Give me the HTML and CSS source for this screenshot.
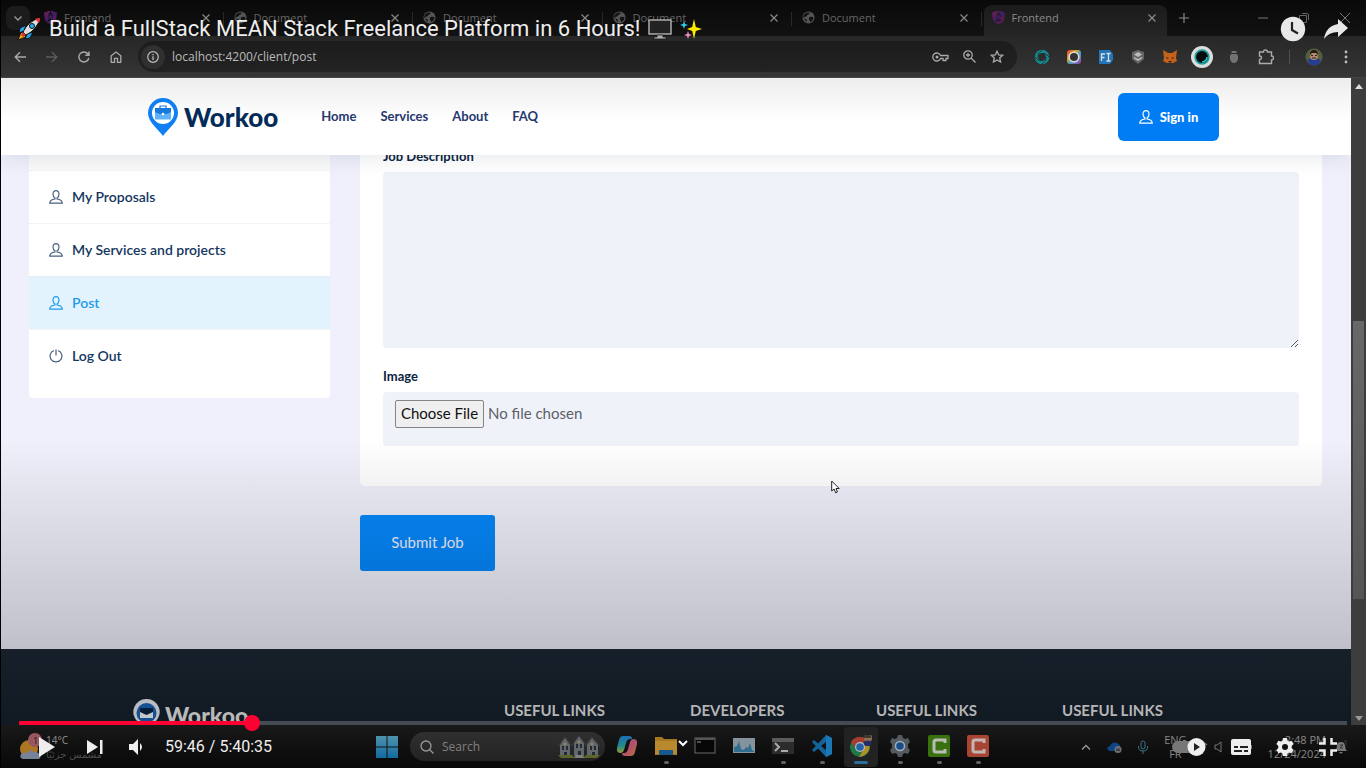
FILE: index.html
```html
<!DOCTYPE html>
<html lang="en">
<head>
<meta charset="utf-8">
<title>Build a FullStack MEAN Stack Freelance Platform in 6 Hours!</title>
<link rel="stylesheet" href="styles.css">
</head>
<body>
<svg class="defs" aria-hidden="true">
  <defs>
    <linearGradient id="ng" x1="0" y1="0" x2="1" y2="1"><stop offset="0" stop-color="#7a1d50"/><stop offset=".5" stop-color="#3d1e66"/><stop offset="1" stop-color="#7b1748"/></linearGradient>
    <linearGradient id="rainbow" x1="0" y1="0" x2="1" y2="1"><stop offset="0" stop-color="#e43d30"/><stop offset=".35" stop-color="#d9a52a"/><stop offset=".6" stop-color="#3e9fd0"/><stop offset="1" stop-color="#b335a0"/></linearGradient>
    <linearGradient id="cop" x1="0" y1="0" x2="1" y2="1"><stop offset="0" stop-color="#8a5aa0"/><stop offset=".5" stop-color="#b0506a"/><stop offset="1" stop-color="#b8743c"/></linearGradient>
    <linearGradient id="copblue" x1="0" y1="0" x2="0" y2="1"><stop offset="0" stop-color="#1b6fb5"/><stop offset=".6" stop-color="#258a8c"/><stop offset="1" stop-color="#9c9a32"/></linearGradient>
    <linearGradient id="win" x1="0" y1="0" x2="0" y2="1"><stop offset="0" stop-color="#4f93ae"/><stop offset="1" stop-color="#136a9f"/></linearGradient>
    <symbol id="angular" viewBox="0 0 14 14"><path d="M5 0 0 2l1 8 3 2L5 4l2-4Z M9 0l5 2-1 8-3 2-1-8-2-4Z M4 11h6l2 1-5 2-5-2Z M7 3l3 6H8L7 7 6 9H4Z" fill="url(#ng)"/></symbol>
    <symbol id="globe" viewBox="0 0 14 14"><circle cx="7" cy="7" r="6.500" fill="#555"/><path d="M2 4c2-2 4-3 6-2 1 1-1 2-2 2s0 2-2 2-1 2-3 1ZM7.500 7c1-1 4-1 5 0l-1 3-2.500 2c-1-1 0-2-1.500-2.500ZM2 8l3 1v3Z" fill="#121212"/></symbol>
    <symbol id="x" viewBox="0 0 10 10"><path d="m1.500 1.500 7 7m0-7-7 7" stroke="currentColor" stroke-width="1.200" fill="none"/></symbol>
    <symbol id="person" viewBox="0 0 14 14"><path d="M7 .7c-2 0-3 1.400-3 3.300 0 1.700.7 3.300 2 4v1C4 9.300.8 10.500.7 13.200h12.600C13.200 10.500 10 9.300 8 9V8c1.300-.7 2-2.300 2-4C10 2.100 9 .7 7 .7Z" fill="none" stroke="currentColor" stroke-width="1.200"/></symbol>
    <symbol id="pin" viewBox="0 0 30 38"><path d="M15 0a15 15 0 0 0-15 15c0 9 10 16 15 23 5-7 15-14 15-23A15 15 0 0 0 15 0Z" fill="#0f7ff2"/><circle cx="15" cy="15" r="11" fill="#fff"/><path d="M7 10h16v11.500H7z" fill="#5eb2fa"/><path d="M7 10h16v4c-5 3-11 3-16 0Z" fill="#1779dd"/><path d="M12 10V8h6v2" fill="none" stroke="#1779dd" stroke-width="1.200"/><circle cx="15" cy="16" r="1.300" fill="#fff"/></symbol>
  </defs>
</svg>

<div class="desktop">
  <div class="tabstrip">
    <button class="tab-search" aria-label="Search tabs"><svg width="10" height="10" viewBox="0 0 10 10"><path d="m1.500 3.500 3.500 3.500 3.500-3.500" fill="none" stroke="#999" stroke-width="1.400"/></svg></button>
    <div class="tabs">
      <div class="tab"><svg class="fav"><use href="#angular"/></svg><span class="tab-name">Frontend</span><button class="tab-close" aria-label="Close tab"><svg><use href="#x"/></svg></button></div>
      <div class="tab"><svg class="fav"><use href="#globe"/></svg><span class="tab-name">Document</span><button class="tab-close" aria-label="Close tab"><svg><use href="#x"/></svg></button></div>
      <div class="tab"><svg class="fav"><use href="#globe"/></svg><span class="tab-name">Document</span><button class="tab-close" aria-label="Close tab"><svg><use href="#x"/></svg></button></div>
      <div class="tab"><svg class="fav"><use href="#globe"/></svg><span class="tab-name">Document</span><button class="tab-close" aria-label="Close tab"><svg><use href="#x"/></svg></button></div>
      <div class="tab"><svg class="fav"><use href="#globe"/></svg><span class="tab-name">Document</span><button class="tab-close" aria-label="Close tab"><svg><use href="#x"/></svg></button></div>
      <div class="tab active"><svg class="fav"><use href="#angular"/></svg><span class="tab-name">Frontend</span><button class="tab-close" aria-label="Close tab"><svg><use href="#x"/></svg></button></div>
    </div>
    <button class="new-tab" aria-label="New tab"><svg width="10" height="10" viewBox="0 0 10 10"><path d="M5 0v10M0 5h10" stroke="#888" stroke-width="1.200"/></svg></button>
    <div class="window-buttons">
      <button aria-label="Minimize"><svg width="10" height="10" viewBox="0 0 10 10"><path d="M0 5h10" stroke="#777"/></svg></button>
      <button aria-label="Restore"><svg width="10" height="10" viewBox="0 0 10 10"><path d="M.5 2.500h7v7h-7zM3 .5h5q1.500 0 1.500 1.500v5" fill="none" stroke="#666"/></svg></button>
      <button aria-label="Close"><svg width="10" height="10" viewBox="0 0 10 10"><path d="m0 0 10 10M10 0 0 10" stroke="#777"/></svg></button>
    </div>
  </div>

  <div class="toolbar">
    <div class="nav-buttons">
      <button aria-label="Back"><svg width="12" height="12" viewBox="0 0 12 12"><path d="M12 6H1.500M6 1.200 1.200 6 6 10.800" fill="none" stroke="#aaa" stroke-width="1.400"/></svg></button>
      <button aria-label="Forward"><svg width="12" height="12" viewBox="0 0 12 12"><path d="M0 6h10.500M6 1.200 10.800 6 6 10.800" fill="none" stroke="#5c5c5c" stroke-width="1.400"/></svg></button>
      <button aria-label="Reload"><svg width="12" height="12" viewBox="0 0 12 12"><path d="M10.800 7A5 5 0 1 1 9.800 2.800L11 4M11 .5V4.300H7.300" fill="none" stroke="#aaa" stroke-width="1.400"/></svg></button>
      <button aria-label="Home"><svg width="12" height="12" viewBox="0 0 12 12"><path d="M1.200 11.300V4.800L6 1l4.800 3.800v6.500H7.500v-4h-3v4Z" fill="none" stroke="#aaa" stroke-width="1.300"/></svg></button>
    </div>
    <div class="address">
      <span class="site-info"><svg width="12" height="12" viewBox="0 0 12 12"><circle cx="6" cy="6" r="5.300" fill="none" stroke="#bbb" stroke-width="1.200"/><path d="M6 5.200V9M6 3v1.300" stroke="#bbb" stroke-width="1.300"/></svg></span>
      <input class="url" aria-label="Address" value="localhost:4200/client/post">
      <button aria-label="Passwords"><svg width="17" height="12" viewBox="0 0 17 12"><path d="M8.500 4.500A4 4 0 1 0 8.500 7.500H11V9.500h3V7.500h2V4.500Z" fill="none" stroke="#aaa" stroke-width="1.300"/><circle cx="5" cy="6" r="1.500" fill="#aaa"/></svg></button>
      <button aria-label="Zoom"><svg width="13" height="13" viewBox="0 0 13 13"><path d="M8 8l4.500 4.500M3 5h4M5 3v4" stroke="#aaa" stroke-width="1.300"/><circle cx="5" cy="5" r="4.200" fill="none" stroke="#aaa" stroke-width="1.300"/></svg></button>
      <button aria-label="Bookmark"><svg width="14" height="13" viewBox="0 0 14 13"><path d="m7 1.200 1.700 3.700 4 .4-3 2.700.9 4L7 9.900 3.400 12l.9-4-3-2.700 4-.4Z" fill="none" stroke="#aaa" stroke-width="1.300"/></svg></button>
    </div>
    <div class="extensions">
      <svg viewBox="0 0 16 16"><circle cx="8" cy="8" r="5.500" fill="none" stroke="#148a8f" stroke-width="3.500"/><path d="M8 1Q3 4 4 9M15 8q-4-5-8-3M8 15q5-3 4-7M1 8q4 5 8 3" fill="none" stroke="#222" stroke-width=".8"/></svg>
      <svg viewBox="0 0 16 16"><rect x="1" y="1" width="14" height="14" rx="3" fill="url(#rainbow)"/><circle cx="8" cy="8" r="4.800" fill="#343434" stroke="#ddd" stroke-width="1.600"/></svg>
      <svg viewBox="0 0 16 16"><path d="M1 1h11l3 4v6l-3 4H1Z" fill="#2275b9"/><path d="M3.500 12V5H7M3.500 8.500h3M8.500 4.500h4M10.500 4.500v7M8.500 12h4" fill="none" stroke="#ddd" stroke-width="1.300"/></svg>
      <svg viewBox="0 0 16 16"><path d="m8 1 6 2v7l-6 5-6-5V3Z" fill="#666"/><path d="m8 3 4 2.500L8 8 4 5.500ZM4 8l4 2 4-2v1.500L8 12 4 9.500Z" fill="#bbb"/></svg>
      <svg viewBox="0 0 16 16"><path d="m1 1 5 3h4l5-3-1 8 1 3-4 2H5l-4-2 1-3Z" fill="#c4621c"/><path d="m4 8 3 1-2 1ZM12 8 9 9l2 1ZM6 12h4l-1 1.500H7Z" fill="#402414"/></svg>
      <svg viewBox="0 0 22 22" class="ext-large"><circle cx="11" cy="11" r="11" fill="#ddd"/><circle cx="11" cy="11" r="6.800" fill="#060b0c" stroke="#1d9ea0" stroke-width="1.800"/><path d="M11 16a5 5 0 0 0 5-5" fill="none" stroke="#27d0cf" stroke-width="1.500"/></svg>
      <svg viewBox="0 0 16 16"><path d="M5.500 2h5v2h-5zM5 5h6l1 2v3q-1 4-4 4t-4-4V7Z" fill="#737373"/></svg>
      <svg viewBox="0 0 16 16"><path d="M1.500 3h4q0-2 2-2t2 2h4v4q2 0 2 2t-2 2v3.500h-12V10.500q2 0 2-1.700t-2-1.800Z" fill="none" stroke="#aaa" stroke-width="1.400"/></svg>
    </div>
    <span class="divider"></span>
    <svg class="avatar" viewBox="0 0 18 18"><circle cx="9" cy="9" r="8.500" fill="#55603c"/><path d="M2 12q7-4 14 0l-3 5H5Z" fill="#263d94"/><circle cx="9" cy="8" r="4" fill="#b78870"/><path d="M5 7q0-5 4-5t4 5l-2-2H7Z" fill="#241b17"/><path d="M6 7.500h2M10 7.500h2M7 10h4" stroke="#222"/></svg>
    <button class="menu" aria-label="Menu"><svg width="4" height="14" viewBox="0 0 4 14"><g fill="#bbb"><circle cx="2" cy="2" r="1.400"/><circle cx="2" cy="7" r="1.400"/><circle cx="2" cy="12" r="1.400"/></g></svg></button>
  </div>

  <div class="browser-view">
    <div class="page">
      <header class="site-header">
        <a class="brand" href="#"><svg width="30" height="38"><use href="#pin"/></svg><span>Workoo</span></a>
        <nav class="site-nav"><a href="#">Home</a><a href="#">Services</a><a href="#">About</a><a href="#">FAQ</a></nav>
        <button class="sign-in"><svg width="14" height="14"><use href="#person"/></svg>Sign in</button>
      </header>
      <main class="content">
        <nav class="side-menu">
          <a class="side-top" href="#" aria-label="Previous item"></a>
          <a href="#"><svg><use href="#person"/></svg>My Proposals</a>
          <a href="#"><svg><use href="#person"/></svg>My Services and projects</a>
          <a class="current" href="#"><svg><use href="#person"/></svg>Post</a>
          <a href="#"><svg viewBox="0 0 14 14"><path d="M5 1.500a5.900 5.900 0 1 0 4 0M7 .5v6" fill="none" stroke="currentColor" stroke-width="1.200"/></svg>Log Out</a>
        </nav>
        <form class="job-form">
          <div class="panel">
            <label for="desc" class="first-label">Job Description</label>
            <textarea id="desc"></textarea>
            <label for="image">Image</label>
            <input type="file" id="image">
          </div>
          <button type="button" class="submit">Submit Job</button>
        </form>
      </main>
      <footer class="site-footer">
        <div class="footer-brand"><svg width="27" height="34" viewBox="0 0 27 34"><path d="M13.500 0A13 13 0 0 0 5 23l8.500 11L22 23A13 13 0 0 0 13.500 0Z" fill="#b9bcc0"/><circle cx="13.500" cy="14" r="10" fill="#164f93"/><path d="M7 10h13v9H7z" fill="#c3c7cc"/><path d="M7 9h13v4l-6.500 3L7 13Z" fill="#081d38"/></svg><span>Workoo</span></div>
        <h4>USEFUL LINKS</h4><h4>DEVELOPERS</h4><h4>USEFUL LINKS</h4><h4>USEFUL LINKS</h4>
      </footer>
    </div>
    <div class="scrollbar">
      <svg width="8" height="5" viewBox="0 0 8 5"><path d="M0 5 4 0l4 5Z" fill="#ddd"/></svg>
      <span class="before-thumb"></span><span class="thumb"></span><span class="after-thumb"></span>
      <svg width="8" height="5" viewBox="0 0 8 5"><path d="m0 0 4 5 4-5Z" fill="#999"/></svg>
    </div>
  </div>

  <div class="taskbar">
    <div class="weather">
      <svg width="26" height="28" viewBox="0 0 26 28"><circle cx="10" cy="16" r="9" fill="#ac7623"/><path d="M4 26q-4-1-2-5 3-3 5 0 3-6 8-2 2-1 4 1 5 2 1 6Z" fill="#758298"/><circle cx="16" cy="7" r="7" fill="#98585f"/><text x="14" y="11" class="badge-text">1</text></svg>
      <div class="weather-text"><span>14°C</span><span dir="rtl">مشمس جزئيًا</span></div>
    </div>
    <div class="apps">
      <svg class="start" viewBox="0 0 22 22"><path d="M0 0h10.500v10.500H0zM11.500 0H22v10.500H11.500zM0 11.500h10.500V22H0zM11.500 11.500H22V22H11.500z" fill="url(#win)"/></svg>
      <div class="search"><svg width="14" height="14" viewBox="0 0 14 14"><circle cx="6" cy="6" r="5" fill="none" stroke="#999" stroke-width="1.300"/><path d="m9.500 9.500 4 4" stroke="#999" stroke-width="1.300"/></svg><input aria-label="Search" placeholder="Search"><svg width="42" height="22" viewBox="0 0 42 22"><path d="M2 20V9l5-7 5 7v11ZM16 20V7l5-7 5 7v13ZM29 20V9l5-7 6 7v11Z" fill="#62686c"/><path d="m0 10 7-9 7 9M14 9l7-9 7 9M27 10l7-9 8 9" fill="none" stroke="#3d4044"/><path d="M4 10h2v4H4zm4 0h2v4H8zm-2 6h3v4H6zm12-8h2v4h-2zm4 0h2v4h-2zm-2 7h3v5h-3zm12-5h2v4h-2zm4 0h2v4h-2zm-2 6h3v4h-3z" fill="#222b32"/><path d="M6 7h2v2H6zm14-2h2v2h-2zm13 2h2v2h-2z" fill="#a58a4c"/><path d="M0 19h14l3 3h8l3-3h14l-3 3H3Z" fill="#5c6428"/><path d="m18 19 6 0 3 3H16Z" fill="#80817a"/></svg></div>
      <span class="app idle"><svg viewBox="0 0 22 22"><path d="M7 1h6q3 0 3 3h-2q-3 0-4 4L8 15q-1 3-3 3-5 0-4-5l2-8q1-4 4-4Z" fill="url(#copblue)"/><path d="M15 21H9q-3 0-3-3h2q3 0 4-4l2-7q1-3 3-3 5 0 4 5l-2 8q-1 4-4 4Z" fill="url(#cop)"/></svg></span>
      <span class="app"><svg viewBox="0 0 22 22"><path d="M0 2h7l2 2h13v16H0Z" fill="#a8781f"/><path d="M0 6h22v13H0Z" fill="#b88a2d"/><path d="M4 15h14v5H4Z" fill="#16598d"/></svg></span>
      <span class="app idle"><svg viewBox="0 0 22 22"><rect x="1" y="3" width="20" height="15" fill="#060606" stroke="#6b6b6b"/><path d="M2 4h18" stroke="#555" stroke-width="2"/><path d="M3 7h4" stroke="#999"/></svg></span>
      <span class="app idle"><svg viewBox="0 0 22 22"><path d="M0 3h22v15H0Z" fill="#84939c"/><path d="M1 17v-5l3-1 2-5 2 8 3 1 2-3 2 1 2-5 2 7 2 1v1Z" fill="#326d91"/></svg></span>
      <span class="app"><svg viewBox="0 0 22 22"><path d="M0 3h22v16H0Z" fill="#2c2c2c"/><path d="M0 3h22v4H0Z" fill="#5b5b5b"/><path d="m3 8 4 4-4 4M9 16h7" fill="none" stroke="#aaa" stroke-width="2"/></svg></span>
      <span class="app"><svg viewBox="0 0 22 22"><path d="M1 7 3 5l13 11V6L3 17l-2-2L15 0l6 3v16l-6 3Z" fill="#14639b"/><path d="m15 0 6 3v16l-6 3Z" fill="#1b78b7"/></svg></span>
      <span class="app focused"><svg viewBox="0 0 22 22"><circle cx="10" cy="12" r="10" fill="#1e7a45"/><path d="M1 7q3-5 9-5 6 0 9 5h-9l-4 7Z" fill="#a93a31"/><path d="M12 7h7q2 8-3 12-3 3-7 3l5-8Z" fill="#b48f27"/><circle cx="10" cy="12" r="5" fill="#b8bcc0"/><circle cx="10" cy="12" r="3.800" fill="#2463ac"/><circle cx="18" cy="3" r="4" fill="#8e7054"/><path d="M14 1q3-3 7 0v2h-7Z" fill="#40382c"/><path d="M13 7q5-3 9 0l-2 4h-5Z" fill="#222d63"/></svg></span>
      <span class="app"><svg viewBox="0 0 22 22"><path d="M9 0h4l1 3 2 1 3-1 2 4-2 2v4l2 2-2 4-3-1-2 1-1 3H9l-1-3-2-1-3 1-2-4 2-2V9L1 7l2-4 3 1 2-1Z" fill="#555a60"/><circle cx="11" cy="11" r="4.500" fill="#164e88" stroke="#a3b0bc" stroke-width="1.500"/></svg></span>
      <span class="app"><svg viewBox="0 0 22 22"><rect width="22" height="22" rx="2" fill="#3a710f"/><path d="M17 8V5H8Q6 5 6 7v8q0 2 2 2h9v-3" fill="none" stroke="#b8bcb5" stroke-width="3"/></svg></span>
      <span class="app"><svg viewBox="0 0 22 22"><rect width="22" height="22" rx="2" fill="#a84434"/><path d="M17 8V5H8Q6 5 6 7v8q0 2 2 2h9v-3" fill="none" stroke="#c3b5b2" stroke-width="3"/></svg></span>
    </div>
    <div class="tray">
      <svg width="10" height="6" viewBox="0 0 10 6"><path d="m1 5.500 4-4 4 4" fill="none" stroke="#999" stroke-width="1.300"/></svg>
      <svg width="15" height="12" viewBox="0 0 15 12"><path d="M3 10q-4-1-2-4 2-1 2-1 2-5 7-3 3 1 3 4v4Z" fill="#0e4585"/><circle cx="11" cy="8.500" r="3.500" fill="#6d7377"/><path d="M9 8h4M9 9.500h4" stroke="#222" stroke-width=".8"/></svg>
      <svg width="10" height="14" viewBox="0 0 10 14"><rect x="3" y="1" width="4" height="8" rx="2" fill="none" stroke="#3c7382"/><path d="M.5 6v1q0 4 4.500 4t4.500-4V6M5 11v3" fill="none" stroke="#3c7382"/></svg>
      <div class="lang"><span>ENG</span><span>FR</span></div>
      <svg width="66" height="14" viewBox="0 0 66 14"><path d="M0 5q9-8 17 0M3 8q6-5 11 0" fill="none" stroke="#777" stroke-width="1.400"/><path d="M25 5h2l4-3v10l-4-3h-2Z" fill="none" stroke="#777"/><rect x="42" y="3" width="18" height="8" rx="2" fill="#777"/><path d="M61 5v4" stroke="#777" stroke-width="2"/></svg>
      <div class="clock"><span>2:48 PM</span><span>12/24/2024</span></div>
      <svg width="14" height="14" viewBox="0 0 14 14"><path d="M1 11q2-2 2-6 0-3 4-3 4 0 4 3 0 4 2 6ZM5 12h4q-2 3-4 0Z" fill="#777"/><path d="M6 5h3L6 8h3M10 1h3l-3 3h3" fill="none" stroke="#333"/></svg>
    </div>
  </div>
</div>

<svg class="pointer" width="9" height="14" viewBox="0 0 9 14"><path d="M.7 1v10l2.400-2 1.500 3.800 1.800-.8L5 8.500h3.200Z" fill="#fff" stroke="#222"/></svg>

<div class="player">
  <div class="player-top">
    <h1 class="video-title">
      <svg width="24" height="24" viewBox="0 0 24 24"><path d="M4 15 1 23l8-3Z" fill="#f5a21b" stroke="#111"/><path d="M9 8 3 11l-1 5 5-2ZM16 15l-3 6-5 1 2-5Z" fill="#22a7e8" stroke="#111"/><path d="M6 15Q11 4 23 1 20 13 9 18Z" fill="#ddd" stroke="#111"/><path d="M18 2q2-1 5-1 0 3-1 5Z" fill="#e33"/><circle cx="15" cy="9" r="2.500" fill="#2bb1ee" stroke="#111"/><path d="m6 15 3 3-3 2-2-2Z" fill="#d33"/></svg>
      <span>Build a FullStack MEAN Stack Freelance Platform in 6 Hours!</span>
      <svg width="24" height="22" viewBox="0 0 24 22"><path d="M1 2h22v14H1Z" fill="#222" stroke="#aaa" stroke-width="1.500"/><path d="M9 17h6v2h3v2H6v-2h3Z" fill="#aaa" stroke="#111" stroke-width=".7"/></svg>
      <svg width="22" height="22" viewBox="0 0 22 22"><path d="m14 1 1.800 8L22 11l-6.200 2L14 21l-1.800-8L7 11l5.200-2Z" fill="#ffea00"/><path d="m4 3 1 3 3 1-3 1-1 3-1-3-3-1 3-1Z" fill="#30cff5"/><path d="m8 13 1 3 3 1-3 1-1 3-1-3-3-1 3-1Z" fill="#f58bc4"/></svg>
    </h1>
    <button aria-label="Watch later"><svg width="26" height="26" viewBox="0 0 26 26"><circle cx="13" cy="13" r="12.200" fill="#e8e8e8"/><path d="M12 6v8l6 3.500" fill="none" stroke="#222" stroke-width="2.200"/></svg></button>
    <button aria-label="Share"><svg width="24" height="20" viewBox="0 0 24 20"><path d="M14 0v5Q2 7 0 20q5-7 14-7v5l10-9Z" fill="#e8e8e8"/></svg></button>
  </div>
  <button class="more" aria-label="More videos"><svg width="10" height="7" viewBox="0 0 10 7"><path d="m1 1 4 4 4-4" fill="none" stroke="#fff" stroke-width="2"/></svg></button>
  <div class="player-bottom">
    <input class="progress" type="range" aria-label="Seek" min="0" max="20435" value="3586">
    <div class="controls">
      <button aria-label="Play"><svg width="16" height="20" viewBox="0 0 16 20"><path d="M0 0v20l16-10Z" fill="#eee"/></svg></button>
      <button aria-label="Next"><svg width="16" height="16" viewBox="0 0 16 16"><path d="M0 1v14l11-7ZM13 1h2.500v14H13Z" fill="#eee"/></svg></button>
      <button aria-label="Mute"><svg width="14" height="16" viewBox="0 0 14 16"><path d="M0 5v6h4l5 5V0L4 5ZM11 4q4 4 0 8Z" fill="#eee"/></svg></button>
      <span class="time">59:46 / 5:40:35</span>
      <span class="spring"></span>
      <button aria-label="Autoplay"><svg width="34" height="18" viewBox="0 0 34 18"><rect y="3" width="26" height="12" rx="6" fill="#777"/><circle cx="24.500" cy="9" r="9" fill="#eee"/><path d="M22 5v8l6-4Z" fill="#222"/></svg></button>
      <button aria-label="Subtitles"><svg width="20" height="16" viewBox="0 0 20 16"><rect width="20" height="16" rx="2" fill="#eee"/><path d="M3 8h4M9 8h8M3 12h8M13 12h4" stroke="#222" stroke-width="2"/></svg></button>
      <button aria-label="Settings"><svg width="18" height="18" viewBox="0 0 18 18"><path d="M7 0h4l.5 2.500 1.700 1L15.600 2.700l2 3.400L15.700 8v2l1.900 1.900-2 3.400-2.400-.8-1.700 1L11 18H7l-.5-2.500-1.700-1-2.400.8-2-3.400L2.300 10V8L.4 6.100l2-3.400 2.400.8 1.700-1ZM9 6a3 3 0 1 0 0 6 3 3 0 0 0 0-6Z" fill="#eee" fill-rule="evenodd"/></svg></button>
      <button aria-label="Exit full screen"><svg width="18" height="18" viewBox="0 0 18 18"><path d="M0 5.500h5.500V0M18 5.500h-5.500V0M0 12.500h5.500V18M18 12.500h-5.500V18" fill="none" stroke="#eee" stroke-width="2.500"/></svg></button>
    </div>
  </div>
</div>
</body>
</html>
```
FILE: styles.css
```css
* { box-sizing: border-box; }
body { margin: 0; min-height: 100vh; background: #000; overflow: hidden; font-family: "Open Sans", sans-serif; }
button { border: 0; padding: 0; background: none; color: inherit; font: inherit; display: flex; align-items: center; justify-content: center; flex: none; }
a { color: inherit; text-decoration: none; }
svg { display: block; flex: none; }
.defs { position: absolute; width: 0; height: 0; }
.desktop { height: 100vh; display: flex; flex-direction: column; padding-left: 1px; }

/* Browser frame */
.tabstrip { height: 36px; flex: none; display: flex; align-items: center; background: linear-gradient(#090909, #121212); color: #777; font-size: 11px; padding-left: 5px; }
.tab-search { width: 24px; height: 24px; border-radius: 8px; background: #1c1c1c; }
.tabs { flex: 0 1 1131px; min-width: 0; display: flex; margin-left: 6px; align-self: stretch; padding-top: 5px; }
.tab { flex: 1 1 190px; min-width: 0; display: flex; align-items: center; padding: 0 15px 6px 8px; color: #666; position: relative; }
.tab:not(.active)::after { content: ""; position: absolute; right: 2px; top: 7px; width: 1px; height: 14px; background: #292929; }
.tab.active { flex-basis: 184px; padding-right: 10px; background: linear-gradient(#1b1b1b, #252525); border-radius: 8px 8px 0 0; color: #8a8a8a; }
.fav { width: 13px; height: 13px; }
.tab-name { flex: 1; margin-left: 7px; }
.tab-close svg { width: 10px; height: 10px; color: #888; }
.new-tab { width: 24px; height: 24px; margin-left: 5px; }
.window-buttons { margin-left: auto; display: flex; gap: 31px; padding-right: 16px; }
.toolbar { height: 42px; flex: none; display: flex; align-items: center; background: linear-gradient(#272727, #353535); border-bottom: 1px solid #444; padding: 0 18px 0 13px; }
.nav-buttons { display: flex; gap: 20px; }
.address { flex: 1; min-width: 0; height: 31px; margin-left: 16px; border-radius: 16px; background: linear-gradient(#1c1c1c, #232323); display: flex; align-items: center; gap: 14px; padding: 0 13px 0 3px; }
.site-info { width: 24px; height: 24px; border-radius: 12px; background: #303030; display: flex; align-items: center; justify-content: center; }
.url { flex: 1; min-width: 0; border: 0; padding: 0; margin-left: -7px; background: none; color: #bbb; font: 12px "Open Sans", sans-serif; }
.extensions { display: flex; align-items: center; gap: 16px; margin-left: 17px; }
.extensions svg { width: 16px; height: 16px; }
.extensions .ext-large { width: 22px; height: 22px; margin: 0 -3px; }
.divider { width: 1px; height: 14px; background: #505050; margin-left: 15px; }
.avatar { width: 18px; height: 18px; margin-left: 15px; }
.menu { margin-left: 21px; }
.browser-view { flex: 1; min-height: 0; display: flex; }
.scrollbar { width: 15px; flex: none; background: #3d3d3d; display: flex; flex-direction: column; align-items: center; padding: 6px 0 4px; }
.before-thumb { flex: 232; }
.thumb { flex: 277; width: 11px; background: linear-gradient(#686868, #555); }
.after-thumb { flex: 117; }

/* Web page */
.page { flex: 1; min-width: 0; display: flex; flex-direction: column; overflow: hidden; font-family: Lato, sans-serif; background: #eff0fb; }
.site-header { height: 77px; flex: none; display: flex; align-items: center; padding: 0 132px 0 147px; background: linear-gradient(#ededed, #fff 55%); box-shadow: 0 4px 20px #00204018; position: relative; z-index: 1; }
.brand { display: flex; align-items: center; gap: 6px; color: #032b57; font-size: 26px; font-weight: 900; line-height: 38px; }
.site-nav { display: flex; gap: 24px; margin-left: 43px; padding-bottom: 2px; font-size: 13px; font-weight: 700; color: #26386e; }
.sign-in { margin-left: auto; width: 101px; height: 48px; gap: 7px; border-radius: 6px; background: #007df5; color: #fff; font-size: 13px; font-weight: 900; }
.content { flex: none; display: flex; align-items: flex-start; gap: 30px; padding: 0 29px 78px 28px; position: relative; }
.content::after { content: ""; position: absolute; inset: auto 0 0; height: 210px; background: linear-gradient(#0000, #0000000e 25%, #00000033); pointer-events: none; }
.side-menu { flex: 0 1 301px; background: #fff; border-radius: 0 0 4px 4px; padding-bottom: 16px; color: #143660; }
.side-menu a { height: 53px; display: flex; align-items: center; gap: 9px; padding: 0 20px; font-size: 14px; font-weight: 600; line-height: 20px; }
.side-menu a + a { border-top: 1px dotted #e8e8e8; }
.side-menu .side-top { height: 15px; background: #fafafa; }
.side-menu svg { width: 14px; height: 14px; color: #4a607c; }
.side-menu .current, .side-menu .current svg { color: #1d9bea; }
.side-menu .current { background: #e3f3fe; }
.job-form { flex: 1; min-width: 0; }
.panel { background: #fff; padding: 0 23px 40px; border-radius: 0 0 5px 5px; display: flex; flex-direction: column; }
.panel label { font-size: 13px; font-weight: 700; line-height: 20px; color: #0d2440; margin: 18px 0 6px; }
.panel .first-label { margin-top: -9px; }
.panel textarea { display: block; width: 100%; height: 176px; border: 0; border-radius: 4px; background: #f0f2fa; resize: vertical; }
.panel input { width: 100%; height: 54px; border: 0; border-radius: 4px; background: #f0f2fa; padding: 8px 12px; font: 15px Lato, sans-serif; color: #5b5f66; }
.panel input::file-selector-button { height: 28px; width: 89px; padding: 0 0 2px; margin-right: 4px; font: 15px Lato, sans-serif; color: #111; background: #efefef; border: 1px solid #858585; border-radius: 2px; }
.submit { width: 135px; height: 56px; margin-top: 29px; padding-bottom: 2px; background: #0587fa; border-radius: 3px; color: #eef; font-size: 15px; }
.site-footer { flex: 1; min-height: 0; overflow: hidden; display: grid; grid-template-columns: 371fr 186fr 186fr 186fr 187fr; padding: 50px 102px 0 132px; background: linear-gradient(#17202a, #111923); }
.footer-brand { display: flex; align-items: flex-start; gap: 5px; color: #b9b9b9; font-size: 23px; font-weight: 900; line-height: 32px; }
.site-footer h4 { margin: 0; font-size: 15px; line-height: 22px; font-weight: 700; color: #b5b5b5; }

/* Taskbar */
.taskbar { height: 43px; flex: none; display: flex; align-items: center; background: linear-gradient(#191919, #080808); color: #888; font-size: 11px; padding: 0 18px; }
.weather { flex: 0 1 357px; display: flex; gap: 1px; }
.weather-text { display: flex; flex-direction: column; font-size: 10px; line-height: 14px; font-family: "Noto Sans", "DejaVu Sans", sans-serif; }
.weather-text span + span { color: #4c4c4c; }
.badge-text { font: 9px "Open Sans", sans-serif; fill: #220d10; }
.apps { display: flex; align-items: center; gap: 5px; }
.start { width: 22px; height: 22px; margin-right: 7px; }
.search { width: 195px; height: 29px; border-radius: 15px; background: linear-gradient(#303030, #222); display: flex; align-items: center; padding: 0 5px 0 10px; gap: 8px; }
.search input { flex: 1; min-width: 0; padding: 0; border: 0; background: none; font: 12px "Open Sans", sans-serif; color: #888; }
.search input::placeholder { color: #808080; }
.app { width: 34px; height: 40px; display: flex; flex-direction: column; align-items: center; justify-content: flex-end; gap: 4px; }
.app svg { width: 22px; height: 22px; }
.app::after { content: ""; width: 5px; height: 3px; border-radius: 2px; background: #606060; margin-bottom: 3px; }
.app.idle::after { background: none; }
.app.focused { background: #222; border-radius: 4px; }
.app.focused::after { width: 14px; background: #276e9d; }
.tray { margin-left: auto; display: flex; align-items: center; gap: 16px; line-height: 14px; }
.lang, .clock { display: flex; flex-direction: column; font-size: 11px; text-align: center; }
.clock { text-align: right; margin: 0 -8px 0 -4px; }
.lang + svg { margin-left: -13px; }

/* Video player overlay */
.pointer { position: absolute; left: 831px; top: 480px; }
.player { position: absolute; inset: 0; z-index: 2; display: flex; flex-direction: column; justify-content: space-between; font-family: Roboto, sans-serif; color: #eee; }
.player-top { display: flex; align-items: center; height: 57px; padding: 0 18px 0 17px; gap: 18px; }
.video-title { display: flex; align-items: center; gap: 8px; flex: 1; min-width: 0; margin: 0; font-size: 22px; font-weight: 400; line-height: 32px; white-space: nowrap; }
.more { position: absolute; left: 50%; margin-left: -5px; bottom: 21px; }
.player-bottom { padding: 0 11px; }
.progress { appearance: none; -webkit-appearance: none; display: block; width: 100%; height: 16px; margin: 0; background: none; }
.progress::-webkit-slider-runnable-track { height: 4px; background: linear-gradient(90deg, #0000 8px, #f03 8px, #f03 18%, #454b53 18%, #454b53 calc(100% - 8px), #0000 calc(100% - 8px)); }
.progress::-webkit-slider-thumb { -webkit-appearance: none; width: 16px; height: 16px; margin-top: -6px; border-radius: 8px; background: #f03; }
.controls { height: 37px; padding: 0 19px 6px 28px; display: flex; align-items: center; gap: 26px; }
.controls button:first-child { margin-right: 6px; }
.time { font-size: 16px; line-height: 20px; margin-left: -4px; }
.spring { flex: 1; }
.controls .spring ~ button { margin-right: -1px; }
```
